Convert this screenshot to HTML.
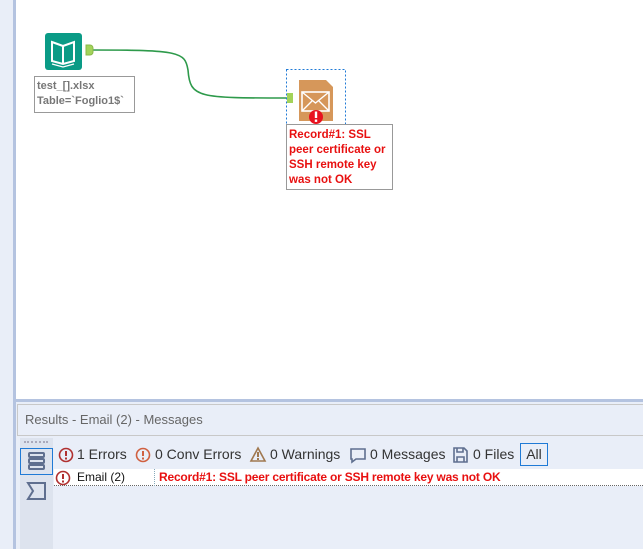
<!DOCTYPE html>
<html><head><style>
*{margin:0;padding:0;box-sizing:border-box}
body{width:643px;height:549px;overflow:hidden;background:#e9eef8;font-family:"Segoe UI","Liberation Sans",sans-serif;position:relative}
.a{position:absolute}
.t{font-family:"Liberation Sans",sans-serif}
</style></head><body>
<div class="a" style="left:0;top:0;width:13px;height:549px;background:#e9eef8"></div>
<div class="a" style="left:13px;top:0;width:3px;height:549px;background:#b4c3e0"></div>
<div class="a" style="left:16px;top:0;width:627px;height:399px;background:#fff"></div>
<div class="a" style="left:16px;top:399px;width:627px;height:3px;background:#b4c3e0"></div>
<div class="a" style="left:17px;top:404px;width:626px;height:32px;border:1px solid #c8c8c8;border-right:none;background:#e9eef8"></div>
<div class="a t" style="left:25px;top:412px;font-size:13px;color:#666">Results - Email (2) - Messages</div>

<svg class="a" style="left:0;top:0" width="643" height="400">
<path d="M91 50 C180 50 185 52 188 70 C190 98 198 98 288 98" fill="none" stroke="#2e9a4b" stroke-width="1.6"/>
<rect x="45" y="33" width="37" height="37" rx="3" fill="#0a9b86"/>
<path d="M52 42 L63 46 L74 42 L74 61 L63 64 L52 61Z M63 46 L63 64" fill="none" stroke="#fff" stroke-width="2"/>
<path d="M52 64 L63 67 L74 64" fill="none" stroke="#fff" stroke-width="1.2"/>
<path d="M86 45 h4 a3 3 0 0 1 3 3 v4 a3 3 0 0 1 -3 3 h-4z" fill="#a3d35a" stroke="#8ab84a"/>
<rect x="286.5" y="69.5" width="59" height="56" fill="none" stroke="#1f7ad6" stroke-dasharray="2,2"/>
<path d="M299 80 H326 L333 87 V121 H299Z" fill="#d6975a"/>
<rect x="302" y="92" width="27" height="19" fill="none" stroke="#fff" stroke-width="1.6"/>
<path d="M302 92 L315.5 103 L329 92 M302 111 L312 101 M329 111 L319 101" fill="none" stroke="#fff" stroke-width="1.4"/>
<rect x="287" y="93" width="6" height="10" fill="#a3d35a"/>
<circle cx="316" cy="117" r="7" fill="#e8121f"/>
<rect x="314.8" y="111.5" width="2.4" height="6.5" fill="#fff"/><rect x="314.8" y="119.5" width="2.4" height="2.4" fill="#fff"/>
</svg>
<div class="a t" style="left:34px;top:76px;width:101px;height:37px;border:1px solid #999;background:#fff;font-size:11px;font-weight:bold;color:#777;line-height:15px;padding:2px 0 0 2px">test_[].xlsx<br>Table=`Foglio1$`</div>
<div class="a t" style="left:286px;top:124px;width:107px;height:66px;border:1px solid #999;background:#fff;font-size:11.5px;font-weight:bold;color:#e81010;line-height:15px;padding:3px 0 0 2px">Record#1: SSL<br>peer certificate or<br>SSH remote key<br>was not OK</div>

<div class="a" style="left:20px;top:438px;width:33px;height:111px;background:#dde3ee"></div>
<div class="a" style="left:24px;top:441px;width:24px;border-top:2px dotted #aab"></div>
<div class="a" style="left:20px;top:448px;width:33px;height:27px;border:1px solid #1f7ad6"></div>
<svg class="a" style="left:20px;top:448px" width="33" height="60">
<g fill="none" stroke="#5f6f8f" stroke-width="2"><rect x="9" y="5" width="15" height="4" rx="1"/><rect x="9" y="11" width="15" height="4" rx="1"/><rect x="9" y="17" width="15" height="4" rx="1"/>
<path d="M8 35 H25 V51 H8 L13 43Z"/></g></svg>

<div class="a" style="left:54px;top:469px;width:589px;height:17px;background:#fff;border-bottom:1px dotted #666"></div>
<div class="a" style="left:154px;top:469px;height:17px;border-left:1px dotted #8ab"></div>
<svg class="a" style="left:54px;top:444px" width="420" height="45">
<g fill="none" stroke-width="1.6"><circle cx="12" cy="11" r="6.5" stroke="#b03030"/><circle cx="89" cy="11" r="6.5" stroke="#d06040"/>
<path d="M204 4 L211 17 H197Z" stroke="#a07850"/>
<path d="M297 5 H311 V15 H302 L298 18 V15 H297Z" stroke="#5f6f8f"/>
<path d="M400 4 H410 L413 7 V18 H400Z M403 4 V8 H409 V4 M403 18 V13 H410 V18" stroke="#5f6f8f"/>
<circle cx="9" cy="34" r="6.5" stroke="#b03030"/></g>
<g fill="#b03030"><rect x="11" y="7" width="2" height="5"/><rect x="11" y="13.5" width="2" height="2"/><rect x="8" y="30" width="2" height="5"/><rect x="8" y="36.5" width="2" height="2"/></g>
<g fill="#d06040"><rect x="88" y="7" width="2" height="5"/><rect x="88" y="13.5" width="2" height="2"/></g>
<g fill="#a07850"><rect x="203" y="8" width="2" height="5"/><rect x="203" y="14" width="2" height="2"/></g>
</svg>
<div class="a t" style="top:446px;font-size:14px;color:#333;left:77px;white-space:nowrap">1 Errors</div>
<div class="a t" style="top:446px;font-size:14px;color:#333;left:155px;white-space:nowrap">0 Conv Errors</div>
<div class="a t" style="top:446px;font-size:14px;color:#333;left:270px;white-space:nowrap">0 Warnings</div>
<div class="a t" style="top:446px;font-size:14px;color:#333;left:370px;white-space:nowrap">0 Messages</div>
<div class="a t" style="top:446px;font-size:14px;color:#333;left:473px;white-space:nowrap">0 Files</div>
<div class="a t" style="left:520px;top:443px;width:28px;height:23px;border:1px solid #1f7ad6;font-size:14px;color:#333;text-align:center;line-height:21px">All</div>
<div class="a t" style="left:77px;top:470px;font-size:12px;color:#111">Email (2)</div>
<div class="a t" style="left:159px;top:470px;font-size:12px;font-weight:bold;color:#e81010;letter-spacing:-0.2px;white-space:nowrap">Record#1: SSL peer certificate or SSH remote key was not OK</div>
</body></html>
